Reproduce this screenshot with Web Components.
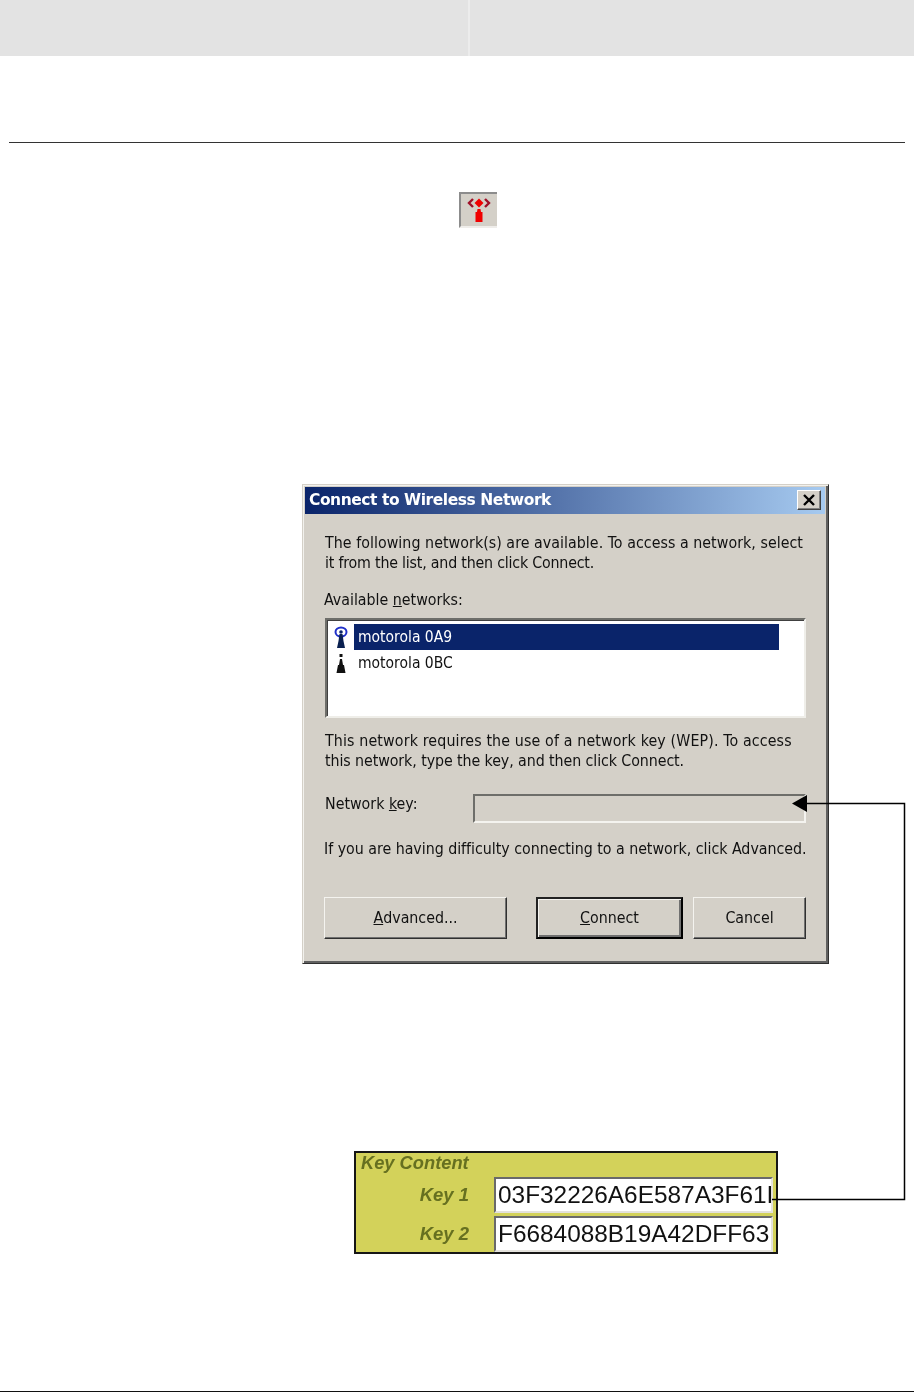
<!DOCTYPE html>
<html lang="en"><head><meta charset="utf-8"><title>Connect to Wireless Network</title>
<style>
html,body{margin:0;padding:0;background:#fff}
body{width:914px;height:1392px;overflow:hidden;position:relative;font-family:"DejaVu Sans Condensed","DejaVu Sans",sans-serif}
</style></head><body>
<doc-topbar></doc-topbar>
<doc-rule style="margin-top:86px;--inset:9px;--color:#333"></doc-rule>
<signal-button></signal-button>
<wifi-dialog heading="Connect to Wireless Network">
  <dlg-text style="margin-top:19px"><span style="display:block;letter-spacing:.045px">The following network(s) are available. To access a network, select</span><span style="display:block;letter-spacing:-.2px">it from the list, and then click Connect.</span></dlg-text>
  <dlg-text style="margin-top:17px;margin-left:-1px">Available <u>n</u>etworks:</dlg-text>
  <net-list style="margin-top:8px">
    <net-item selected icon="on">motorola 0A9</net-item>
    <net-item icon="off">motorola 0BC</net-item>
  </net-list>
  <dlg-text style="margin-top:13px"><span style="display:block;letter-spacing:.14px">This network requires the use of a network key (WEP). To access</span><span style="display:block;letter-spacing:-.08px">this network, type the key, and then click Connect.</span></dlg-text>
  <key-row style="margin-top:23px">Network <u>k</u>ey:</key-row>
  <dlg-text style="margin-top:16px;margin-left:-1px;letter-spacing:-.02px">If you are having difficulty connecting to a network, click Advanced.</dlg-text>
  <btn-row style="margin-top:38px">
    <win-button style="width:183px;margin-right:29px"><u>A</u>dvanced...</win-button>
    <win-button default style="width:147px;margin-right:10px"><u>C</u>onnect</win-button>
    <win-button style="width:113px">Cancel</win-button>
  </btn-row>
</wifi-dialog>
<key-panel>
  <key-field label="Key 1" value="03F32226A6E587A3F61" tail="I"></key-field>
  <key-field label="Key 2" value="F6684088B19A42DFF63"></key-field>
</key-panel>
<doc-rule style="margin-top:137px;--inset:0px;--color:#111"></doc-rule>
<callout-arrow></callout-arrow>
<script>
function el(name,css,html){
  customElements.define(name,class extends HTMLElement{
    connectedCallback(){
      if(this.shadowRoot)return;
      const r=this.attachShadow({mode:'open'});
      r.innerHTML='<style>'+css+'</style>'+(typeof html==='function'?html(this):html);
    }
  });
}
el('doc-topbar',':host{display:flex;height:56px;background:#e3e3e3}i{display:block;width:2px;margin-left:468px;background:#ececec}','<i></i>');
el('doc-rule',':host{display:block;height:1px;margin-left:var(--inset);margin-right:var(--inset);background:var(--color)}','');
el('signal-button',':host{display:block;width:38px;height:36px;margin:49px 0 0 459px;box-sizing:border-box;background:#d4d0c8;border-top:2px solid #8c8c8c;border-left:2px solid #8c8c8c;border-bottom:2px solid #efedea;filter:blur(.4px)}svg{display:block}',
 `<svg width="36" height="32" viewBox="0 0 36 32"><g fill="none" stroke="#a01028" stroke-width="2.400"><path d="M12 5l-4 4 4 4M24 5l4 4-4 4"/></g><path d="M18 4.500l4.500 4.500-4.500 4.500-4.500-4.500z" fill="#f00000"/><path d="M16.500 15h3l.5 3h1.500v10h-7V18h1.500z" fill="#f00000"/></svg>`);
el('wifi-dialog',`:host{display:block;box-sizing:border-box;width:527px;height:480px;margin:256px 0 0 302px;background:#d4d0c8;border:1px solid;border-color:#d4d0c8 #303030 #303030 #d4d0c8;box-shadow:inset 1px 1px 0 #f2f1ed,inset -2px -2px 0 #606060;padding:2px 3px 2px 2px;filter:blur(.35px)}
.t{box-sizing:border-box;height:27px;display:flex;align-items:center;justify-content:space-between;background:linear-gradient(90deg,#0a246a,#a6caf0);color:#fff;font:bold 15.500px "DejaVu Sans",sans-serif;letter-spacing:-.45px;padding:0 4px 1px 4px;white-space:nowrap}
.x{width:24px;height:20px;box-sizing:border-box;background:#d4d0c8;border:1px solid;border-color:#fff #404040 #404040 #fff;box-shadow:inset -1px -1px 0 #808080;display:flex;align-items:center;justify-content:center}
.b{padding:0 0 0 20px;display:flex;flex-direction:column;color:#111}`,
 h=>`<div class="t"><span>${h.getAttribute('heading')}</span><span class="x"><svg width="14" height="12" viewBox="0 0 14 12"><path d="M2 1l10 10M12 1L2 11" stroke="#000" stroke-width="2.400" fill="none"/></svg></span></div><div class="b"><slot></slot></div>`);
const txt='font:15.820px/20px "DejaVu Sans Condensed","DejaVu Sans",sans-serif;color:#111;white-space:nowrap;';
el('dlg-text',':host{display:block;'+txt+'}','<slot></slot>');
el('net-list',':host{display:block;box-sizing:border-box;width:481px;height:100px;background:#fff;border:2px solid;border-color:#6e6e6a #efeee9 #efeee9 #6e6e6a;box-shadow:inset 1px 1px 0 #404040;padding:4px 25px 0 27px}','<slot></slot>');
el('net-item',':host{display:flex;align-items:center;box-sizing:border-box;height:26px;position:relative;'+txt+'font-size:15.500px;padding:0 0 0 4px}:host([selected]){background:#0a246a;color:#fff}svg{position:absolute;left:-21px;top:1px}',
 h=>(h.getAttribute('icon')==='on'
  ?`<svg width="16" height="24" viewBox="0 0 16 24"><ellipse cx="8" cy="7" rx="5.500" ry="4.600" fill="none" stroke="#2030c8" stroke-width="2"/><circle cx="8" cy="7" r="1.800" fill="#0a246a"/><path d="M6.500 9h3l1 7 1.500 7H4l1.500-7z" fill="#0a2050"/></svg>`
  :`<svg width="16" height="24" viewBox="0 0 16 24"><path d="M6.500 3h3v3h-3zM7 8h2l1 6h1l1.500 8h-9L5 14h1z" fill="#111"/></svg>`)+'<slot></slot>');
el('key-row',':host{display:flex;width:481px;height:29px;'+txt+'}.f{box-sizing:border-box;width:333px;height:29px;margin-left:auto;border:2px solid;border-color:#6e6e6a #f4f3ef #f4f3ef #6e6e6a}.l{flex:none}',
 '<span class="l"><slot></slot></span><span class="f"></span>');
el('btn-row',':host{display:flex;margin-left:-1px}','<slot></slot>');
el('win-button',':host{display:flex;align-items:center;justify-content:center;box-sizing:border-box;height:42px;'+txt+'background:#d4d0c8;border:1px solid;border-color:#f4f3ef #303030 #303030 #f4f3ef;box-shadow:inset -1px -1px 0 #707070}:host([default]){border:2px solid;border-color:#222 #000 #000 #222;box-shadow:inset 1px 1px 0 #f4f3ef,inset -2px -2px 0 #707070}','<slot></slot>');
el('key-panel',':host{display:flex;flex-direction:column;box-sizing:border-box;width:424px;height:103px;margin:187px 0 0 354px;background:#d3d25a;border:2px solid #161616;padding:0 3px 0 0;filter:blur(.35px)}.h{font:italic bold 18.300px/20px "Liberation Sans",sans-serif;color:#667020;padding:0 0 0 5px;height:24px}.r{display:flex;flex-direction:column;gap:3px}',
 '<div class="h">Key Content</div><div class="r"><slot></slot></div>');
el('key-field',':host{display:flex;align-items:center;height:36px}.n{width:113px;text-align:right;font:italic bold 18.500px "Liberation Sans",sans-serif;color:#667020;flex:none}.i{margin-left:25px;box-sizing:border-box;width:279px;height:36px;background:#fff;border:2px solid;border-color:#6a6a6a #e4e2dc #e4e2dc #6a6a6a;font:24.400px/32px "Liberation Sans",sans-serif;color:#111;padding-left:2px;white-space:nowrap;overflow:hidden}.c{letter-spacing:-3px}',
 h=>`<span class="n">${h.getAttribute('label')}</span><span class="i">${h.getAttribute('value')}${h.getAttribute('tail')?`<span class="c">${h.getAttribute('tail')}</span>`:''}</span>`);
el('callout-arrow',':host{position:absolute;left:760px;top:790px;display:block;width:150px;height:420px;pointer-events:none}svg{display:block}',
 `<svg width="150" height="420" viewBox="0 0 150 420"><path d="M40 13.500H144.500V409.500H12" fill="none" stroke="#000" stroke-width="1.500"/><path d="M32 13.500L47 5v17z" fill="#000"/></svg>`);
</script>
</body></html>
